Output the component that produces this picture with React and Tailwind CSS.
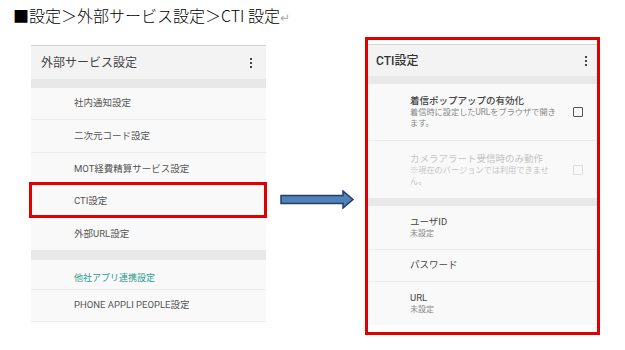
import React from "react";

const font = { fontFamily: '"Roboto", "Noto Sans CJK JP", sans-serif' };

const Kebab = () => (
  <svg width="4" height="12" viewBox="0 0 4 12" className="fill-[#444]">
    <rect x="1" y="1" width="2" height="2" />
    <rect x="1" y="5" width="2" height="2" />
    <rect x="1" y="9" width="2" height="2" />
  </svg>
);

const Row = ({ h, children, last }) => (
  <div
    className={`flex items-center pl-[43px] text-[9.5px] text-[#555] ${h} ${
      last ? "" : "border-b border-[#ececec]"
    }`}
  >
    {children}
  </div>
);

const LeftPanel = () => (
  <div className="w-[235px] bg-[#f9f9f9] border-t border-[#cfcfcf]">
    <div className="h-[33px] bg-[#f3f3f3] flex items-center justify-between pl-[10px] pr-[13px]">
      <span className="text-[12px] text-[#444]">外部サービス設定</span>
      <Kebab />
    </div>
    <div className="h-[9px] bg-[#e8e8e8]"></div>
    <Row h="h-[32px]">社内通知設定</Row>
    <Row h="h-[33px]">二次元コード設定</Row>
    <Row h="h-[33px]">MOT経費精算サービス設定</Row>
    <div className="relative">
      <Row h="h-[32px]">CTI設定</Row>
      <div className="absolute -left-[2px] -right-[1px] -top-[4px] -bottom-[0px] border-[3px] border-[#e00000]"></div>
    </div>
    <Row h="h-[32px]" last>
      外部URL設定
    </Row>
    <div className="h-[10px] bg-[#e8e8e8]"></div>
    <div className="h-[30px] flex items-end pb-[4px] pl-[43px] text-[9px] text-[#2a9d8f] border-b border-[#ececec]">
      他社アプリ連携設定
    </div>
    <Row h="h-[32px]">PHONE APPLI PEOPLE設定</Row>
  </div>
);

const Arrow = () => (
  <svg width="75" height="19" viewBox="0 0 75 19">
    <path
      d="M1 5.5 H63 V1 L73 9.5 L63 18 V13.5 H1 Z"
      fill="#4f81bd"
      stroke="#243f60"
      strokeWidth="1.5"
    />
  </svg>
);

const Checkbox = ({ disabled }) => (
  <div
    className={`w-[10px] h-[10px] rounded-[1px] border-[1.5px] ${
      disabled ? "border-[#ddd]" : "border-[#555]"
    }`}
  ></div>
);

const RightPanel = () => (
  <div className="w-[235px] h-[298px] border-[3px] border-[#e00000] bg-white pt-[4px] px-0">
    <div className="bg-[#f9f9f9] border-t border-[#d6d6d6]">
      <div className="h-[31px] bg-[#f3f3f3] flex items-center justify-between pl-[8px] pr-[9px]">
        <span className="text-[12px] font-medium text-[#333]">CTI設定</span>
        <Kebab />
      </div>
      <div className="h-[8px] bg-[#e8e8e8]"></div>
      <div className="h-[57px] flex items-center justify-between pl-[42px] pr-[14px] border-b border-[#ececec]">
        <div className="leading-[11px]">
          <div className="text-[9.5px] font-medium text-[#444] mb-[1px]">着信ポップアップの有効化</div>
          <div className="text-[8.2px] text-[#888]">
            着信時に設定したURLをブラウザで開き
            <br />
            ます。
          </div>
        </div>
        <Checkbox />
      </div>
      <div className="h-[57px] flex items-center justify-between pl-[42px] pr-[14px]">
        <div className="leading-[11px] text-[#c4c4c4]">
          <div className="text-[9.5px] mb-[1px]">カメラアラート受信時のみ動作</div>
          <div className="text-[8.2px]">
            ※現在のバージョンでは利用できませ
            <br />
            ん。
          </div>
        </div>
        <Checkbox disabled />
      </div>
      <div className="h-[8px] bg-[#e8e8e8]"></div>
      <div className="h-[44px] flex flex-col justify-center pl-[42px] leading-[12px] border-b border-[#ececec]">
        <div className="text-[9.5px] text-[#444]">ユーザID</div>
        <div className="text-[8px] text-[#888]">未設定</div>
      </div>
      <div className="h-[32px] flex items-center pl-[42px] text-[9.5px] text-[#444] border-b border-[#ececec]">
        パスワード
      </div>
      <div className="h-[43px] flex flex-col justify-center pl-[42px] leading-[12px]">
        <div className="text-[9.5px] text-[#444]">URL</div>
        <div className="text-[8px] text-[#888]">未設定</div>
      </div>
    </div>
  </div>
);

export default function App() {
  return (
    <div className="w-[625px] h-[350px] bg-white overflow-hidden" style={font}>
      <div
        className="pt-[6px] pl-[13px] text-[16px] leading-[18px] text-black"
        style={{ fontFamily: '"Noto Sans CJK JP", sans-serif', fontWeight: 300 }}
      >
        ■設定＞外部サービス設定＞CTI 設定<span className="text-[#aaa] text-[12px]">↵</span>
      </div>
      <div className="flex items-start">
        <div className="ml-[31px] mt-[19px]">
          <LeftPanel />
        </div>
        <div className="ml-[14px] mt-[164px]">
          <Arrow />
        </div>
        <div className="ml-[10px] mt-[11px]">
          <RightPanel />
        </div>
      </div>
    </div>
  );
}
